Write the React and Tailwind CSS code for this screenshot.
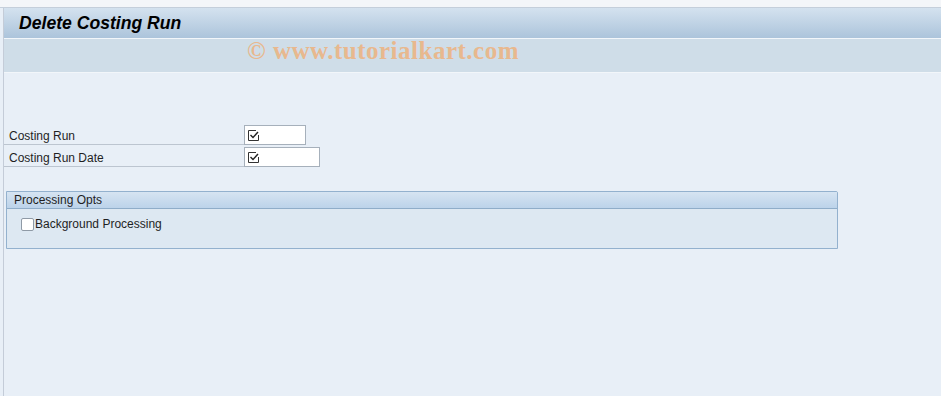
export default function App() {
  return (
    <div className="w-[941px] h-[396px] overflow-hidden bg-[#e8eff7] flex flex-col" style={{ fontFamily: '"Liberation Sans", Arial, sans-serif' }}>
      {/* top strip */}
      <div className="h-[8px] bg-[#f4f6f9] border-b border-[#c5cfdb] shrink-0" />

      <div className="flex-1 flex flex-col ml-[3px] border-l border-[#c4ccd8]">
        {/* title bar */}
        <div className="h-[30px] bg-gradient-to-b from-[#d4e2ef] to-[#acc4db] flex items-center pl-[15px] shrink-0">
          <h1 className="text-[17.6px] font-bold italic text-black">Delete Costing Run</h1>
        </div>

        {/* toolbar */}
        <div className="h-[35px] bg-[#cfdde8] border-t border-[#f2f6fa] border-b border-[#a4b5c9] flex items-start pl-[243px] shrink-0">
          <span className="text-[25px] font-bold leading-[24px] text-[#e8b88e] tracking-[0.5px]" style={{ fontFamily: '"Liberation Serif", "Times New Roman", serif' }}>
            © www.tutorialkart.com
          </span>
        </div>

        {/* selection fields */}
        <div className="pt-[52px] flex flex-col gap-[2px] text-[12px] text-[#1f1f1f]">
          <div className="flex items-stretch">
            <div className="w-[240px] h-[20px] border-b border-[#bcc5d0] pl-[5px] flex items-center pt-[2px]">Costing Run</div>
            <div className="w-[62px] h-[20px] bg-white border border-[#a6b0bb] flex items-center pl-[3px]">
              <CheckIcon />
            </div>
          </div>
          <div className="flex items-stretch">
            <div className="w-[240px] h-[20px] border-b border-[#bcc5d0] pl-[5px] flex items-center pt-[2px]">Costing Run Date</div>
            <div className="w-[76px] h-[20px] bg-white border border-[#a6b0bb] flex items-center pl-[3px]">
              <CheckIcon />
            </div>
          </div>
        </div>

        {/* group box */}
        <div className="mt-[24px] ml-[2px] w-[832px] border border-[#93b1ce] rounded-tr-[2px] bg-[#dde8f2] text-[12px] text-[#1f1f1f]">
          <div className="h-[17px] bg-gradient-to-b from-[#d6e4f2] to-[#bcd3ea] border-b border-[#8fadc9] flex items-center pl-[7px]">
            Processing Opts
          </div>
          <div className="h-[39px] pl-[14px] pt-[6px] flex items-start">
            <label className="flex items-center">
              <span className="w-[13px] h-[13px] bg-white border border-[#8f9aa6] rounded-[2px] mr-[1px]" />
              <span>Background Processing</span>
            </label>
          </div>
        </div>
      </div>
    </div>
  );
}

function CheckIcon() {
  return (
    <svg width="11" height="11" viewBox="0 0 11 11" className="shrink-0">
      <path d="M0.5 0.5 H8 M0.5 0.5 V10.5 H10.5 V5" stroke="#333" strokeWidth="1" fill="none" />
      <path d="M2.5 5 L5 7.5 L10 2" stroke="#222" strokeWidth="1.4" fill="none" />
    </svg>
  );
}
